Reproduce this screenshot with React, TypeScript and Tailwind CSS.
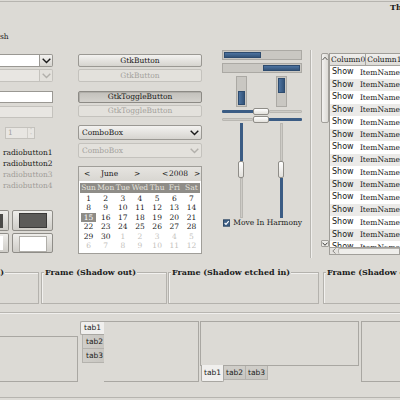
import React from 'react';

type Variant = 'normal' | 'disabled' | 'pressed';

const Chevron = ({ color }: { color: string }) => (
  <svg width="9" height="6" viewBox="0 0 9 6">
    <path d="M0.7 0.8 L4.5 4.6 L8.3 0.8" fill="none" stroke={color} strokeWidth="1.4" />
  </svg>
);

const GtkButton = ({ label, variant, className }: { label: string; variant: Variant; className: string }) => {
  const look =
    variant === 'normal'
      ? 'border-[#9a9893] bg-gradient-to-b from-[#f3f2f0] to-[#d6d4cf] text-[#1a1a1a]'
      : variant === 'pressed'
        ? 'border-[#8c8a85] bg-gradient-to-b from-[#c2c0bb] to-[#d3d1cc] text-[#1a1a1a] shadow-[inset_1px_1px_0_#b0aea9]'
        : 'border-[#c4c2bd] bg-[#e3e1dc] text-[#a4a29d]';
  return (
    <div className={`flex items-center justify-center rounded-[2px] border leading-none ${look} ${className}`}>
      {label}
    </div>
  );
};

const ComboBox = ({ disabled }: { disabled?: boolean }) => (
  <div
    className={`flex h-[15px] items-center justify-between rounded-[2px] border pl-[3px] pr-[2px] leading-none ${
      disabled
        ? 'border-[#c4c2bd] bg-[#e3e1dc] text-[#a4a29d]'
        : 'border-[#9a9893] bg-gradient-to-b from-[#f3f2f0] to-[#d6d4cf] text-[#1a1a1a]'
    }`}
  >
    <span>ComboBox</span>
    <Chevron color={disabled ? '#b2b0ab' : '#1a1a1a'} />
  </div>
);

const monthRows: { d: number; faded?: boolean }[][] = [
  [1, 2, 3, 4, 5, 6, 7].map((d) => ({ d })),
  [8, 9, 10, 11, 12, 13, 14].map((d) => ({ d })),
  [15, 16, 17, 18, 19, 20, 21].map((d) => ({ d })),
  [22, 23, 24, 25, 26, 27, 28].map((d) => ({ d })),
  [{ d: 29 }, { d: 30 }, ...[1, 2, 3, 4, 5].map((d) => ({ d, faded: true }))],
  [6, 7, 8, 9, 10, 11, 12].map((d) => ({ d, faded: true })),
];

const Calendar = () => (
  <div className="mt-[8px] flex h-[88px] flex-col border border-[#a09e99] bg-white">
    <div className="flex h-[14px] items-center whitespace-nowrap bg-gradient-to-b from-[#e6e4e0] to-[#d8d6d1] text-[#1a1a1a]">
      <span className="ml-[5px] w-[17px]">&lt;</span>
      <span className="w-[33px]">June</span>
      <span className="w-[28px]">&gt;</span>
      <span className="w-[7px]">&lt;</span>
      <span className="w-[25px]">2008</span>
      <span>&gt;</span>
    </div>
    <div className="mx-[1px] mt-[2px] grid h-[10px] grid-cols-7 bg-[#8f8d88] leading-[10px] text-[#e4e2dd]">
      {['Sun', 'Mon', 'Tue', 'Wed', 'Thu', 'Fri', 'Sat'].map((n) => (
        <span key={n} className="text-center">
          {n}
        </span>
      ))}
    </div>
    <div className="mx-[1px] mt-[1px] flex flex-col">
      {monthRows.map((row, i) => (
        <div key={i} className="grid h-[9.4px] grid-cols-7 leading-[9.4px]">
          {row.map((c, j) => (
            <span
              key={j}
              className={`mx-[1px] text-center ${
                i === 2 && j === 0 ? 'bg-[#8e8c87] text-white' : c.faded ? 'text-[#c4c2bd]' : 'text-[#1a1a1a]'
              }`}
            >
              {c.d}
            </span>
          ))}
        </div>
      ))}
    </div>
  </div>
);

const Frame = ({ label, className }: { label: string; className: string }) => (
  <div className={`h-[32px] shrink-0 border border-[#b4b2ad] shadow-[inset_1px_1px_0_#f2f1ef] ${className}`}>
    <div className="-mt-[6px] ml-[2px] flex h-[10px] items-center">
      <span className="bg-[#dcdad5] px-[1px] text-[8px] font-bold leading-none text-[#1a1a1a]">{label}</span>
    </div>
  </div>
);

const Knob = ({ className }: { className: string }) => (
  <div className={`rounded-[2px] border border-[#8f8d88] bg-gradient-to-b from-[#ffffff] to-[#e2e0db] ${className}`} />
);

const treeRows = Array.from({ length: 15 }, (_, i) => i);

export default function App() {
  return (
    <div className="flex h-[400px] w-[400px] flex-col overflow-hidden bg-[#dcdad5] font-['DejaVu_Serif',serif] text-[7.5px] text-[#1a1a1a]">
      <div className="mt-[1px] h-[1px] bg-[#b6b4af]" />
      <div className="h-[10px] whitespace-nowrap pl-[390px] text-[8px] font-bold leading-[10px]">The</div>
      <div className="mt-[20px] h-[10px] leading-[10px]">sh</div>

      {/* widgets */}
      <div className="mt-[8px] flex h-[208px] items-start">
        {/* left column */}
        <div className="mt-[4px] flex w-[53px] shrink-0 flex-col">
          <div className="flex h-[13px]">
            <div className="flex-1 border-y border-r border-[#9a9893] bg-white" />
            <div className="flex w-[13px] items-center justify-center rounded-r-[2px] border-y border-r border-[#9a9893] bg-gradient-to-b from-[#f3f2f0] to-[#d6d4cf]">
              <Chevron color="#1a1a1a" />
            </div>
          </div>
          <div className="mt-[2px] flex h-[13px]">
            <div className="flex-1 border-y border-r border-[#c4c2bd] bg-[#e8e6e2]" />
            <div className="flex w-[13px] items-center justify-center rounded-r-[2px] border-y border-r border-[#c4c2bd] bg-[#e3e1dc]">
              <Chevron color="#b2b0ab" />
            </div>
          </div>
          <div className="mt-[9px] h-[12px] border-y border-r border-[#9a9893] bg-white" />
          <div className="mt-[3px] h-[12px] border-y border-r border-[#c4c2bd] bg-[#e8e6e2]" />
          <div className="ml-[5px] mt-[9px] flex h-[12px] w-[30px] border border-[#c4c2bd] bg-[#e8e6e2]">
            <span className="ml-[2px] flex-1 leading-[10px] text-[#a4a29d]">1</span>
            <div className="flex w-[7px] flex-col items-center justify-center border-l border-[#d0cec9] text-[5px] leading-[5px] text-[#b4b2ad]">
              <span>˄</span>
              <span>˅</span>
            </div>
          </div>
          <div className="mt-[8px] flex flex-col pl-[3px]">
            <span className="h-[11px] leading-[11px]">radiobutton1</span>
            <span className="h-[11px] leading-[11px]">radiobutton2</span>
            <span className="h-[11px] leading-[11px] text-[#9f9d98]">radiobutton3</span>
            <span className="h-[11px] leading-[11px] text-[#9f9d98]">radiobutton4</span>
          </div>
          <div className="mt-[19px] flex h-[21px]">
            <div className="flex w-[9px] items-center rounded-r-[2px] border-y border-r border-[#8f8d88] bg-gradient-to-b from-[#eeedea] to-[#cfcdc8]">
              <div className="h-[14px] w-[3px] bg-[#4b4a48]" />
            </div>
            <div className="ml-[3px] flex flex-1 items-center justify-center rounded-[2px] border border-[#8f8d88] bg-gradient-to-b from-[#eeedea] to-[#cfcdc8]">
              <div className="h-[15px] w-[28px] border border-[#3a3938] bg-[#5c5b59]" />
            </div>
          </div>
          <div className="mt-[2px] flex h-[20px]">
            <div className="flex w-[9px] items-center rounded-r-[2px] border-y border-r border-[#8f8d88] bg-gradient-to-b from-[#eeedea] to-[#cfcdc8]">
              <div className="h-[14px] w-[3px] bg-white" />
            </div>
            <div className="ml-[3px] flex flex-1 items-end justify-center rounded-[2px] border border-[#8f8d88] bg-gradient-to-b from-[#eeedea] to-[#cfcdc8]">
              <div className="h-[16px] w-[28px] border border-[#b0aea9] bg-white" />
            </div>
          </div>
        </div>

        {/* middle column */}
        <div className="ml-[25px] mt-[4px] flex w-[124px] shrink-0 flex-col">
          <GtkButton label="GtkButton" variant="normal" className="h-[13px]" />
          <GtkButton label="GtkButton" variant="disabled" className="mt-[2px] h-[13px]" />
          <GtkButton label="GtkToggleButton" variant="pressed" className="mt-[9px] h-[12px]" />
          <GtkButton label="GtkToggleButton" variant="disabled" className="mt-[2px] h-[12px]" />
          <div className="mt-[8px]">
            <ComboBox />
          </div>
          <div className="mt-[3px]">
            <ComboBox disabled />
          </div>
          <Calendar />
        </div>

        {/* progress and scales */}
        <div className="ml-[20px] flex w-[80px] shrink-0 flex-col">
          <div className="h-[10px] border border-[#aba9a4] bg-[#c9c7c2] p-[1px]">
            <div className="h-full w-[37px] border border-[#2d4b6e] bg-gradient-to-b from-[#4d73a0] to-[#345479]" />
          </div>
          <div className="mt-[3px] flex h-[10px] justify-end border border-[#aba9a4] bg-[#c9c7c2] p-[1px]">
            <div className="h-full w-[37px] border border-[#2d4b6e] bg-gradient-to-b from-[#4d73a0] to-[#345479]" />
          </div>
          <div className="mt-[3px] flex h-[31px]">
            <div className="ml-[14px] flex w-[11px] flex-col justify-end border border-[#aba9a4] bg-[#c9c7c2] p-[1px]">
              <div className="h-[14px] border border-[#2d4b6e] bg-gradient-to-r from-[#4d73a0] to-[#345479]" />
            </div>
            <div className="ml-[29px] flex w-[11px] flex-col border border-[#aba9a4] bg-[#c9c7c2] p-[1px]">
              <div className="h-[15px] border border-[#2d4b6e] bg-gradient-to-r from-[#4d73a0] to-[#345479]" />
            </div>
          </div>
          <div className="mt-[1px] flex h-[7px] items-center">
            <div className="h-[3px] w-[31px] rounded-l-[1px] bg-[#3b5c84]" />
            <Knob className="h-[7px] w-[16px]" />
            <div className="h-[3px] flex-1 rounded-r-[1px] border border-[#b9b7b2] bg-[#cdcbc6]" />
          </div>
          <div className="mt-[1px] flex h-[7px] items-center">
            <div className="h-[3px] w-[31px] rounded-l-[1px] border border-[#b9b7b2] bg-[#cdcbc6]" />
            <Knob className="h-[7px] w-[16px]" />
            <div className="h-[3px] flex-1 rounded-r-[1px] bg-[#3b5c84]" />
          </div>
          <div className="flex h-[95px]">
            <div className="ml-[16px] flex w-[6px] flex-col items-center">
              <div className="h-[38px] w-[3px] bg-[#3b5c84]" />
              <Knob className="h-[17px] w-[6px]" />
              <div className="w-[3px] flex-1 border border-[#b9b7b2] bg-[#cdcbc6]" />
            </div>
            <div className="ml-[34px] flex w-[6px] flex-col items-center">
              <div className="h-[38px] w-[3px] border border-[#b9b7b2] bg-[#cdcbc6]" />
              <Knob className="h-[17px] w-[6px]" />
              <div className="w-[3px] flex-1 bg-[#3b5c84]" />
            </div>
          </div>
          <div className="flex h-[9px] items-center whitespace-nowrap">
            <svg width="8" height="8" viewBox="0 0 8 8" className="ml-[1px]">
              <rect x="0.5" y="0.5" width="7" height="7" fill="#3e5f87" stroke="#27415f" />
              <path d="M1.8 4 L3.3 5.6 L6.3 2" fill="none" stroke="#ffffff" strokeWidth="1.3" />
            </svg>
            <span className="ml-[3px] leading-none">Move In Harmony</span>
          </div>
        </div>

        {/* separator */}
        <div className="ml-[8px] h-[208px] w-[2px] shrink-0 border-l border-r border-l-[#b8b6b1] border-r-[#f0efed]" />

        {/* tree view */}
        <div className="ml-[9px] mt-[3px] flex h-[202px] w-[79px] shrink-0 flex-col overflow-hidden">
          <div className="flex h-[194px]">
            <div className="flex w-[8px] flex-col">
              <div className="flex h-[70px] flex-col items-center rounded-[2px] border border-[#a19f9a] bg-gradient-to-r from-[#f3f2f0] to-[#dcdad5]">
                <svg width="6" height="5" viewBox="0 0 6 5" className="mt-[2px]">
                  <path d="M0.5 4 L3 1.2 L5.5 4" fill="none" stroke="#5a5955" strokeWidth="1" />
                </svg>
              </div>
              <div className="flex-1" />
              <div className="flex h-[7px] items-center justify-center rounded-[1px] border border-[#a19f9a] bg-[#ecebe8]">
                <svg width="6" height="4" viewBox="0 0 6 4">
                  <path d="M0.5 0.7 L3 3.3 L5.5 0.7" fill="none" stroke="#3a3936" strokeWidth="1" />
                </svg>
              </div>
            </div>
            <div className="flex flex-1 flex-col overflow-hidden border-l border-t border-[#9f9d98] bg-white">
              <div className="flex h-[12px] whitespace-nowrap border-b border-[#a6a49f] bg-gradient-to-b from-[#f0efed] to-[#dddbd6] leading-[11px]">
                <span className="w-[38px] border-r border-[#a6a49f] pl-[1px]">Column0</span>
                <span className="pl-[1px]">Column1</span>
              </div>
              {treeRows.map((r) => (
                <div
                  key={r}
                  className={`flex h-[12.5px] shrink-0 items-center whitespace-nowrap ${
                    r % 2 === 0 ? 'bg-white' : 'bg-[#ebeae8]'
                  }`}
                >
                  <span className="w-[38px] pl-[2px] font-['DejaVu_Sans',sans-serif] text-[8px]">Show</span>
                  <span className="pl-[1px]">ItemName</span>
                </div>
              ))}
            </div>
          </div>
          <div className="flex h-[8px]">
            <div className="w-[8px]" />
            <div className="flex flex-1 items-center border border-[#a19f9a] bg-[#e4e2de]">
              <svg width="4" height="6" viewBox="0 0 4 6" className="ml-[2px]">
                <path d="M3.5 0.5 L0.8 3 L3.5 5.5" fill="none" stroke="#8a8884" strokeWidth="1" />
              </svg>
              <div className="ml-[2px] h-full flex-1 rounded-l-[2px] border-l border-t border-[#b4b2ad] bg-[#efeeeb]" />
            </div>
          </div>
        </div>
      </div>

      {/* frames */}
      <div className="mt-[14px] flex h-[32px] whitespace-nowrap">
        <Frame label="Frame (Shadow in)" className="-ml-[85px] w-[124px]" />
        <Frame label="Frame (Shadow out)" className="ml-[2px] w-[126px]" />
        <Frame label="Frame (Shadow etched in)" className="ml-[1px] w-[151px]" />
        <Frame label="Frame (Shadow etched out)" className="ml-[4px] w-[90px]" />
      </div>

      <div className="mt-[8px] h-[2px] border-b border-t border-b-[#f0efed] border-t-[#b8b6b1]" />

      {/* notebooks */}
      <div className="mt-[7px] flex h-[61px] font-['DejaVu_Sans',sans-serif]">
        <div className="-ml-[2px] mt-[15px] h-[46px] w-[80px] shrink-0 border border-[#a9a7a2]" />
        <div className="ml-[2px] flex shrink-0">
          <div className="flex w-[24px] flex-col">
            <div className="flex h-[14px] items-center rounded-l-[2px] border-y border-l border-[#a9a7a2] bg-[#f0efed] pl-[3px]">
              tab1
            </div>
            <div className="ml-[2px] flex h-[14px] items-center border-b border-l border-[#b4b2ad] bg-gradient-to-r from-[#d0cec9] to-[#c8c6c1] pl-[3px]">
              tab2
            </div>
            <div className="ml-[2px] flex h-[14px] items-center border-b border-l border-[#b4b2ad] bg-gradient-to-r from-[#d0cec9] to-[#c8c6c1] pl-[3px]">
              tab3
            </div>
          </div>
          <div className="h-[61px] w-[95px] border-y border-r border-[#a9a7a2]" />
        </div>
        <div className="ml-[1px] flex w-[159px] shrink-0 flex-col">
          <div className="h-[45px] border border-[#a9a7a2]" />
          <div className="flex h-[16px]">
            <div className="-mt-[1px] ml-[1px] flex h-[17px] w-[23px] items-center justify-center rounded-b-[2px] border-x border-b border-[#a9a7a2] bg-[#f0efed]">
              tab1
            </div>
            <div className="flex h-[14px] w-[22px] items-center justify-center border-b border-r border-[#b4b2ad] bg-gradient-to-b from-[#d0cec9] to-[#c8c6c1]">
              tab2
            </div>
            <div className="flex h-[14px] w-[22px] items-center justify-center border-b border-r border-[#b4b2ad] bg-gradient-to-b from-[#d0cec9] to-[#c8c6c1]">
              tab3
            </div>
          </div>
        </div>
        <div className="ml-[2px] h-[61px] w-[60px] shrink-0 border border-[#a9a7a2]" />
      </div>

      <div className="mt-[15px] h-[1px] bg-[#b6b4af]" />
    </div>
  );
}
